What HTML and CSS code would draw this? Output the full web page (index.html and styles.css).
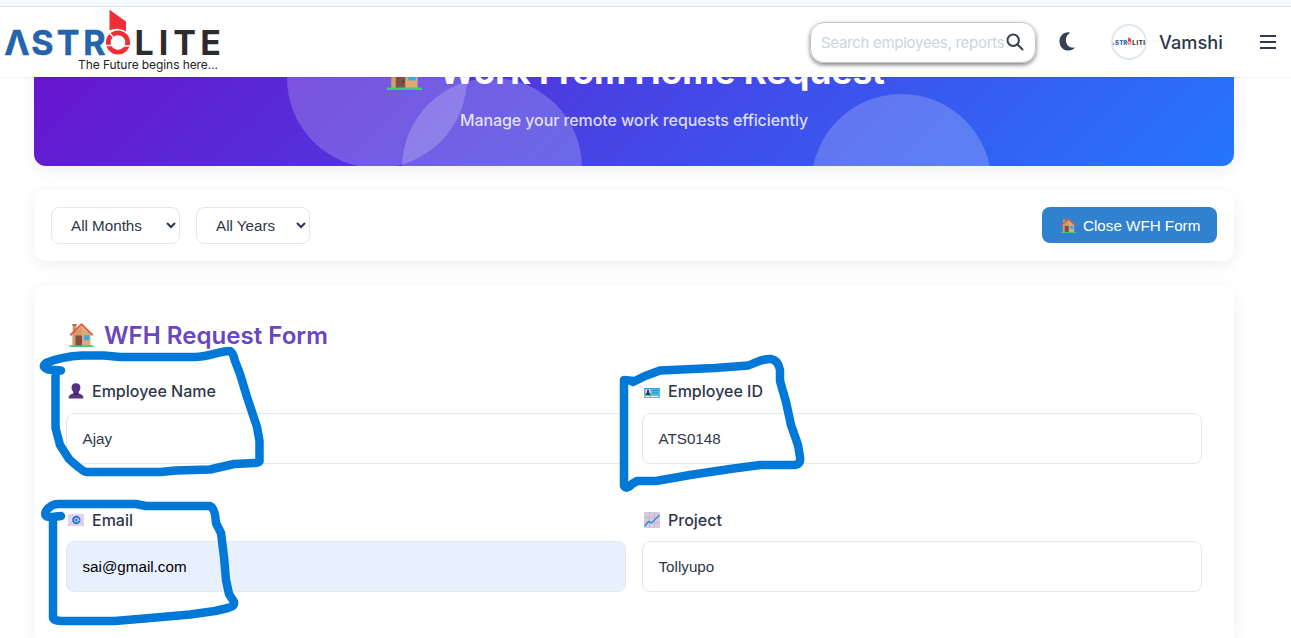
FILE: index.html
```
<!DOCTYPE html>
<html lang="en">
<head>
<meta charset="utf-8">
<title>Work From Home Request</title>
<link rel="stylesheet" href="styles.css">
</head>
<body>
<svg width="0" height="0" class="defs">
  <symbol id="house" viewBox="0 0 24 24">
    <rect x="3.2" y="1.6" width="3.6" height="9" fill="#c99560"/>
    <rect x="2.8" y="1" width="4.4" height="1.8" fill="#a9774c"/>
    <path d="M3 11.5 12 3l9 8.500V23H3Z" fill="#dfa878"/>
    <path d="M3 11.500 12 3v20H3Z" fill="#c98f58" opacity=".45"/>
    <path d="M.8 12.300 12 1.300l11.200 11" fill="none" stroke="#e9573f" stroke-width="1.900"/>
    <path d="M6 12.500h6.500V23H6Z" fill="#7d5147"/>
    <circle cx="11.200" cy="18" r=".6" fill="#3d2522"/>
    <rect x="14.600" y="12.200" width="5.200" height="5.200" fill="#2db2ee"/>
    <rect x="0" y="22.300" width="24" height="1.700" fill="#3ecb74"/>
  </symbol>
</svg>
<div class="topstrip"></div>
<header class="header">
  <svg class="logo" width="226" height="70" viewBox="0 7 226 70">
    <g class="logo-word">
      <text class="logo-blue" x="17 42.500 68 94.500" y="54.500">ΛSTR</text>
      <text class="logo-dark" x="144 163.500 184.500 210.500" y="54.500">LITE</text>
    </g>
    <circle cx="118" cy="42.500" r="9.700" fill="none" stroke="#ee2f37" stroke-width="4.800"/>
    <path d="M106 45.500h6M110 33.500l4 4.500M124 46h7" stroke="#fff" stroke-width="1.400"/>
    <path d="M109.500 9.800 126 21.500v9.700q-7.500-4.500-16.500-1Z" fill="#ee2f37"/>
    <text class="logo-tag" x="78" y="69" textLength="140">The Future begins here...</text>
  </svg>
  <div class="search">
    <span class="search-text">Search employees, reports</span>
    <svg class="search-icon" width="18" height="18" viewBox="0 0 18 18"><circle cx="7.200" cy="7.200" r="5.700"/><path d="m11.500 11.500 5 5"/></svg>
  </div>
  <svg class="moon" width="17" height="19" viewBox="0 0 17 19"><path d="M10.200.4C4.500-.2.500 4.200.5 9.400c0 5.300 4 9.200 9 9.200 2.700 0 5-1.100 6.600-3-5.400.9-9.200-2.700-9.200-7.600 0-3 1.200-5.800 4.300-7.100Z"/></svg>
  <svg class="avatar" width="36" height="36" viewBox="0 0 36 36">
    <circle cx="18" cy="18" r="17" fill="#fff" stroke="#e2e8f0" stroke-width="2"/>
    <g class="mini-word">
      <circle cx="2.500" cy="20" r=".8" fill="#2464ad"/>
      <text class="logo-blue" x="6 10.200 14.200" y="20.700">STR</text>
      <text class="logo-dark" x="23 26.300 29.700 33" y="20.700">LITI</text>
    </g>
    <circle cx="18.500" cy="18.500" r="1.700" fill="none" stroke="#ee2f37" stroke-width="1"/>
    <path d="M17.200 13.300 20 15v2.200h-2.800Z" fill="#ee2f37"/>
    <path d="M14 23h18" stroke="#bbb" stroke-width=".6" stroke-dasharray="1 3"/>
  </svg>
  <span class="user">Vamshi</span>
  <svg class="menu" width="18" height="14" viewBox="0 0 18 14"><path d="M1 1h16M1 7h16M1 13h16"/></svg>
</header>
<main class="page">
  <section class="hero">
    <svg class="hero-circles" width="1200" height="151" viewBox="0 0 1200 151">
      <circle cx="343" cy="63" r="90"/><circle cx="458" cy="153" r="90"/><circle cx="867.500" cy="169" r="90"/>
    </svg>
    <h1 class="hero-title"><svg class="hero-house" width="35" height="35"><use href="#house"/></svg><span class="hero-text">Work From Home Request</span></h1>
    <p class="hero-sub">Manage your remote work requests efficiently</p>
  </section>
  <section class="filters">
    <select class="select months"><option>All Months</option></select>
    <select class="select years"><option>All Years</option></select>
    <button class="close-btn"><svg width="15" height="15"><use href="#house"/></svg>Close WFH Form</button>
  </section>
  <section class="form">
    <h2 class="form-title"><svg width="25" height="24"><use href="#house"/></svg>WFH Request Form</h2>
    <div class="grid">
      <div class="field">
        <label class="label"><svg width="16" height="16" viewBox="0 0 16 16"><path d="M.5 15.500c0-3 2-4.500 5-5V9.200C3.500 7 3.300 5 3.800 3 4.500.8 6 .3 8 .3s3.700.7 4.200 2.700c.5 2 .1 4-1.700 6.200v1.300c3 .5 5 2 5 5Z" fill="#533286"/><path d="M5.500 9.200Q8 11 10.500 9.200v1.500Q8 12.500 5.500 10.700Z" fill="#3b1f68"/></svg>Employee Name</label>
        <div class="input">Ajay</div>
      </div>
      <div class="field">
        <label class="label"><svg width="16" height="16" viewBox="0 0 16 16"><rect y="5" width="16" height="10" rx=".5" fill="#50bdf2"/><path d="M0 5h16v1H0Z" fill="#3d9bdc"/><rect x="1.500" y="6.500" width="5" height="6" fill="#bfe6f7"/><path d="M3 7h2v2.500l1.300 1v1.700H1.700v-1.700L3 9.500Z" fill="#47304c"/><path d="M8 7.500h6.500M8 10h6.500" stroke="#2580c6"/><path d="M1.500 13.500h4M7 13.500h7.500" stroke="#e5f7ff"/></svg>Employee ID</label>
        <div class="input">ATS0148</div>
      </div>
      <div class="field lower">
        <label class="label"><svg width="16" height="16" viewBox="0 0 16 16"><rect y="2" width="16" height="12" fill="#e2d3ee"/><path d="M0 14 6 8M16 14l-6-6" stroke="#cdb7df"/><circle cx="8.300" cy="8" r="4.200" fill="#3577d0"/><circle cx="8.300" cy="8" r="1.800" fill="none" stroke="#b9d5f8"/><path d="M10.200 6v2.500q.8 1 1.200-.5" fill="none" stroke="#b9d5f8" stroke-width=".8"/></svg>Email</label>
        <div class="input autofill">sai@gmail.com</div>
      </div>
      <div class="field lower">
        <label class="label"><svg width="16" height="16" viewBox="0 0 16 16"><rect width="16" height="16" rx="1" fill="#d6cbdc"/><path d="M0 5.500h16M0 10.500h16M5.500 0v16M10.500 0v16" stroke="#bfb0ca" stroke-width=".7"/><path d="M.5 14.500 4.500 9.500l3 1.500L15.500 3" fill="none" stroke="#268ede" stroke-width="1.400"/></svg>Project</label>
        <div class="input">Tollyupo</div>
      </div>
    </div>
  </section>
</main>
<svg class="marker" width="1291" height="638" viewBox="0 0 1291 638">
  <path d="M61 370.500 48 369.500Q41 367 46 363C58 358 70 356 82 355.500H104L120 357H195C208 357 219 351 230 351Q233 352 235 361L240 374 247 397 257 427 259.500 441V460Q260 463 254 463L234 464 210 469.500 176 470.500 160 472H86Q82 471 69 459L60 445 55.500 428V372"/>
  <path d="M634 381 624 380V486Q627 490 632 484L637 481H656L690 475 730 469 760 465H795Q801 464 800 457L798 445 791 425 786 402 780 381V370Q778 360 771 359C763 358 756 363 748 365.500L715 368 660 370.500 645 376 633 382"/>
  <path d="M61 516 52 517Q43 518 46 511 51 504 58 504H136L146 506H210Q215 508 216 523L221 533 224 557 226 580 229 594 234 602Q235 606 228 608L215 611 190 614.500 150 618 115 621H62Q53 621 53 617V518"/>
</svg>
</body>
</html>
```
FILE: styles.css
```
* { box-sizing: border-box; }
body {
  margin: 0;
  height: 638px;
  overflow: hidden;
  background: #fff;
  color: #2d3748;
  font-family: Inter, sans-serif;
}
.defs { position: absolute; }
.topstrip { height: 7px; background: #f4f9fc; border-bottom: 1px solid #dbe6ea; }
.header {
  position: relative;
  z-index: 2;
  display: flex;
  align-items: center;
  height: 70px;
  padding-right: 14px;
  background: #fff;
  box-shadow: 0 1px 2px rgba(0, 0, 0, .06);
}
.logo { flex: none; margin-right: auto; }
.logo-word { font: 700 34px Inter, sans-serif; text-anchor: middle; }
.logo-blue { fill: #2464ad; }
.logo-dark { fill: #2d2b2c; }
.logo-word .logo-blue { stroke: #2464ad; stroke-width: .5; }
.logo-tag { font: 400 12px Inter, sans-serif; fill: #222; }
.mini-word { font: 800 6px Inter, sans-serif; text-anchor: middle; }
.search {
  display: flex;
  align-items: center;
  gap: 3px;
  width: 226px;
  height: 41px;
  padding-left: 10px;
  border: 1px solid #c4c4c4;
  border-radius: 14px;
  box-shadow: 0 2px 4px rgba(0, 0, 0, .5);
  margin-right: 23px;
}
.search-text { color: #cbd5e0; font-size: 15px; letter-spacing: -.28px; white-space: nowrap; width: 182px; }
.search-icon { flex: none; fill: none; stroke: #334155; stroke-width: 2; stroke-linecap: round; }
.moon { fill: #334155; margin-right: 35px; position: relative; top: -1px; }
.avatar { margin-right: 12px; }
.user { width: 64px; font-size: 18.200px; font-weight: 500; margin-right: 36px; white-space: nowrap; }
.menu { fill: none; stroke: #2d3b4e; stroke-width: 2; }
.page { width: 1200px; margin: -62px 0 0 34px; }
.hero {
  position: relative;
  height: 151px;
  padding-top: 31px;
  overflow: hidden;
  border-radius: 12px;
  background: linear-gradient(135deg, #6a11cb 0%, #2575fc 100%);
  color: #fff;
  text-align: center;
}
.hero-circles { position: absolute; left: 0; top: 0; fill: rgba(255, 255, 255, .2); }
.hero-title {
  position: relative;
  display: flex;
  justify-content: center;
  align-items: center;
  gap: 17px;
  height: 48px;
  margin: 0;
  padding-left: 4px;
  font-size: 35.200px;
  font-weight: 700;
}
.hero-house { margin-top: 4px; }
.hero-text { padding-top: 2px; }
.hero-sub { position: relative; margin: 14px 0 0; font-size: 16px; line-height: 24px; letter-spacing: -.09px; color: rgba(255, 255, 255, .82); font-weight: 500; }
.hero, .filters, .form { box-shadow: 0 4px 16px rgba(0, 0, 0, .07); }
.filters {
  display: flex;
  align-items: flex-start;
  gap: 16px;
  height: 71px;
  margin-top: 24px;
  padding: 17px 17px 0;
  border-radius: 12px;
  background: #fff;
}
.select {
  height: 37px;
  padding: 0 0 0 15px;
  border: 1px solid #e2e8f0;
  border-radius: 8px;
  background: #fff;
  color: #2d3748;
  font: 15.200px "Liberation Sans", sans-serif;
}
.months { width: 129px; }
.years { width: 114px; }
.close-btn {
  display: flex;
  align-items: center;
  gap: 7px;
  width: 175px;
  height: 36px;
  margin-left: auto;
  padding: 1px 0 0 19px;
  border: 0;
  border-radius: 8px;
  background: #3182ce;
  color: #fff;
  font: 15.200px "Liberation Sans", sans-serif;
  white-space: nowrap;
}
.form { height: 353px; margin-top: 24px; padding: 31px 32px 0; border-radius: 12px 12px 0 0; background: #fff; }
.form-title {
  display: flex;
  align-items: center;
  gap: 10px;
  height: 38px;
  margin: 0 0 25px;
  padding-left: 3px;
  color: #6b46c1;
  font-size: 24.100px;
  font-weight: 600;
}
.grid { display: grid; grid-template-columns: 1fr 1fr; column-gap: 16px; }
.field { height: 128px; }
.label { display: flex; align-items: center; gap: 8px; height: 24px; margin-bottom: 10px; padding-left: 2px; font-size: 16px; font-weight: 500; }
.lower { padding-top: 1px; }
.lower .label { margin-bottom: 9px; }
.input {
  display: flex;
  align-items: center;
  height: 51px;
  padding: 0 15.500px;
  border: 1px solid #e2e8f0;
  border-radius: 8px;
  font: 15.200px "Liberation Sans", sans-serif;
}
.autofill { background: #e8f0fe; color: #000; }
.marker { position: absolute; left: 0; top: 0; z-index: 3; fill: none; stroke: #0078d7; stroke-width: 8.500; stroke-linecap: round; stroke-linejoin: round; pointer-events: none; }
```
